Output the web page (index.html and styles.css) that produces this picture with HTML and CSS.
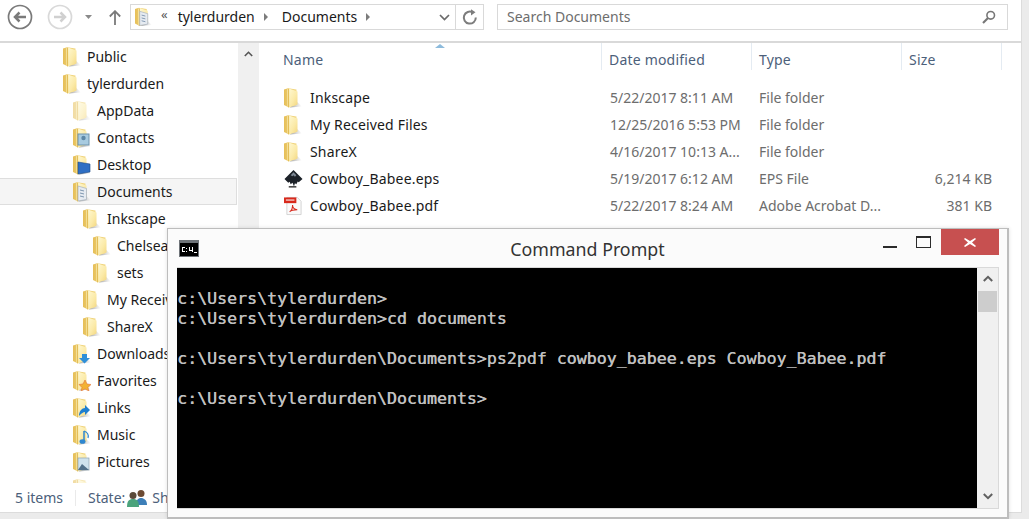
FILE: index.html
```html
<!DOCTYPE html>
<html lang="en">
<head>
<meta charset="utf-8">
<title>Documents</title>
<link rel="stylesheet" href="styles.css">
</head>
<body>
<svg class="defs" width="0" height="0" aria-hidden="true">
  <defs>
    <linearGradient id="fback" x1="0" y1="0" x2="1" y2="0"><stop offset="0" stop-color="#e6bf58"/><stop offset="1" stop-color="#f3da88"/></linearGradient>
    <linearGradient id="ffront" x1="0" y1="0" x2="1" y2="1"><stop offset="0" stop-color="#fffad6"/><stop offset=".6" stop-color="#fbeaa8"/><stop offset="1" stop-color="#f3d67e"/></linearGradient>
    <linearGradient id="fshade" x1="0" y1="0" x2="1" y2="0"><stop offset="0" stop-color="#777" stop-opacity=".7"/><stop offset="1" stop-color="#999" stop-opacity="0"/></linearGradient>
    <symbol id="folder" viewBox="0 0 18 20">
      <path d="M11 12l7 6.500-12 1z" fill="url(#fshade)"/>
      <path d="M0 1.500 4 .2l8.500 1.300V17L4 19 0 17z" fill="url(#fback)"/>
      <path d="M3.500 1.200 5 .6l8.500 2.900V16.500L5 19.500l-1.500-1z" fill="url(#ffront)"/>
      <path d="M4.600 .8v18.600" stroke="#e0b94f" stroke-width="1"/>
    </symbol>
    <symbol id="folder-docs" viewBox="0 0 18 20">
      <use href="#folder" width="18" height="20"/>
      <path d="M5 4l8.500 2.500v11L5 19z" fill="#e6ebf1" stroke="#a4afbd" stroke-width=".7"/>
      <path d="M7 8l4 1M7 11l4 1M7 14l4 1" stroke="#7f97b0"/>
    </symbol>
  </defs>
</svg>

<div class="explorer">
  <header class="toolbar">
    <svg class="nav-back" width="26" height="26" viewBox="0 0 26 26"><circle cx="13" cy="13" r="11.500" fill="#fff" stroke="#7a7a7a" stroke-width="1.700"/><path d="M19 13H8M12.500 8.500 8 13l4.500 4.500" fill="none" stroke="#7a7a7a" stroke-width="2.500"/></svg>
    <svg class="nav-forward" width="26" height="26" viewBox="0 0 26 26"><circle cx="13" cy="13" r="11.500" fill="#fff" stroke="#d9d9d9" stroke-width="1.700"/><path d="M7 13h11M13.500 8.500 18 13l-4.500 4.500" fill="none" stroke="#d0d0d0" stroke-width="2.500"/></svg>
    <svg class="nav-drop" width="8" height="4" viewBox="0 0 8 4"><path d="M0 0h7L3.500 4z" fill="#8a8a8a"/></svg>
    <svg class="nav-up" width="12" height="15" viewBox="0 0 12 15"><path d="M6 15V1.500M.8 6.500 6 1.200l5.200 5.300" fill="none" stroke="#7a7a7a" stroke-width="1.800"/></svg>
    <div class="address">
      <svg class="crumb-icon" width="17" height="20"><use href="#folder-docs" width="17" height="20"/></svg>
      <span class="chev-double">«</span>
      <span class="crumb">tylerdurden</span>
      <span class="crumb-arrow"></span>
      <span class="crumb">Documents</span>
      <span class="crumb-arrow"></span>
      <span class="spacer"></span>
      <svg class="addr-drop" width="11" height="7" viewBox="0 0 11 7"><path d="M1 1l4.500 4.500L10 1" fill="none" stroke="#6a6a6a" stroke-width="1.700"/></svg>
      <span class="refresh">
        <svg width="16" height="17" viewBox="0 0 16 17"><path d="M13.800 8.500a6 6 0 1 1-3-5.100" fill="none" stroke="#7d7d7d" stroke-width="2"/><path d="M9 .3l4.500 2.900L9 6.500z" fill="#7d7d7d"/></svg>
      </span>
    </div>
    <div class="search">
      <span class="search-label">Search Documents</span>
      <svg width="14" height="14" viewBox="0 0 14 14"><circle cx="8.700" cy="5.300" r="3.800" fill="none" stroke="#777" stroke-width="1.600"/><path d="M6 8l-5 5" stroke="#777" stroke-width="2.200"/></svg>
    </div>
  </header>

  <div class="panes">
    <nav class="tree">
      <div class="tree-rows">
        <div class="node l0"><svg class="ico"><use href="#folder" width="18" height="20"/></svg><span>Public</span></div>
        <div class="node l0"><svg class="ico"><use href="#folder" width="18" height="20"/></svg><span>tylerdurden</span></div>
        <div class="node l1 faint"><svg class="ico"><use href="#folder" width="18" height="20"/></svg><span>AppData</span></div>
        <div class="node l1"><svg class="ico" viewBox="0 0 18 20"><use href="#folder" width="18" height="20"/><rect x="5" y="6" width="11" height="11" fill="#a8cbe0" stroke="#6f93ad"/><circle cx="10.500" cy="10" r="2.200" fill="#5d87a6"/></svg><span>Contacts</span></div>
        <div class="node l1"><svg class="ico" viewBox="0 0 18 20"><use href="#folder" width="18" height="20"/><path d="M5 7l12 2v8L5 19z" fill="#2f6fc4" stroke="#1d4a86" stroke-width=".6"/></svg><span>Desktop</span></div>
        <div class="node l1 selected"><svg class="ico"><use href="#folder-docs" width="18" height="20"/></svg><span>Documents</span></div>
        <div class="node l2"><svg class="ico"><use href="#folder" width="18" height="20"/></svg><span>Inkscape</span></div>
        <div class="node l3"><svg class="ico"><use href="#folder" width="18" height="20"/></svg><span>Chelsea</span></div>
        <div class="node l3"><svg class="ico"><use href="#folder" width="18" height="20"/></svg><span>sets</span></div>
        <div class="node l2"><svg class="ico"><use href="#folder" width="18" height="20"/></svg><span>My Received Files</span></div>
        <div class="node l2"><svg class="ico"><use href="#folder" width="18" height="20"/></svg><span>ShareX</span></div>
        <div class="node l1"><svg class="ico" viewBox="0 0 18 20"><use href="#folder" width="18" height="20"/><path d="M9 10h5v4h3l-5.500 5.500L6 14h3z" fill="#2e8fd8"/></svg><span>Downloads</span></div>
        <div class="node l1"><svg class="ico" viewBox="0 0 18 20"><use href="#folder" width="18" height="20"/><path d="M12 9l2 4 4 .5-3 3 1 3.500-4-2-4 2 1-3.500-3-3 4-.5z" fill="#f2b233" stroke="#e0703a" stroke-width=".6"/></svg><span>Favorites</span></div>
        <div class="node l1"><svg class="ico" viewBox="0 0 18 20"><use href="#folder" width="18" height="20"/><path d="M6 18c0-5 3-8 6-8V7l5 5-5 5v-3c-2 0-3 1-6 4z" fill="#1f7fd0"/></svg><span>Links</span></div>
        <div class="node l1"><svg class="ico" viewBox="0 0 18 20"><use href="#folder" width="18" height="20"/><path d="M11 6v10" stroke="#2f87d0" stroke-width="1.500"/><ellipse cx="9.500" cy="16.500" rx="3" ry="2.300" fill="#2f87d0"/><path d="M11 6c3 1 5 3 4 7" fill="none" stroke="#2f87d0" stroke-width="1.200"/></svg><span>Music</span></div>
        <div class="node l1"><svg class="ico" viewBox="0 0 18 20"><use href="#folder" width="18" height="20"/><rect x="5" y="6" width="11" height="12" fill="#cfe3ee" stroke="#8ca3b3" stroke-width=".7"/><path d="M5 18l4-6 7 6z" fill="#52718a"/></svg><span>Pictures</span></div>
        <div class="node l1 faint"><svg class="ico"><use href="#folder" width="18" height="20"/></svg></div>
      </div>
      <div class="tree-scroll">
        <svg width="9" height="6" viewBox="0 0 9 6"><path d="M.8 5 4.500 1.300 8.200 5" fill="none" stroke="#555" stroke-width="1.600"/></svg>
      </div>
    </nav>

    <main class="list">
      <div class="columns">
        <div class="col col-name">Name<span class="sort"></span></div>
        <div class="col col-date">Date modified</div>
        <div class="col col-type">Type</div>
        <div class="col col-size">Size</div>
      </div>
      <div class="rows">
        <div class="row"><div class="c-name"><svg class="ico"><use href="#folder" width="18" height="20"/></svg><span>Inkscape</span></div><div class="c-date">5/22/2017 8:11 AM</div><div class="c-type">File folder</div><div class="c-size"></div></div>
        <div class="row"><div class="c-name"><svg class="ico"><use href="#folder" width="18" height="20"/></svg><span>My Received Files</span></div><div class="c-date">12/25/2016 5:53 PM</div><div class="c-type">File folder</div><div class="c-size"></div></div>
        <div class="row"><div class="c-name"><svg class="ico"><use href="#folder" width="18" height="20"/></svg><span>ShareX</span></div><div class="c-date">4/16/2017 10:13 A...</div><div class="c-type">File folder</div><div class="c-size"></div></div>
        <div class="row"><div class="c-name"><svg class="ico" viewBox="0 0 20 20"><path d="M10 .5 19.500 10l-4 3.500-1-1-1.500 3-1.500-1-1 3.500-1.500-4-2 1.500-1-2.500-1.500 1L.5 10z" fill="#1d2229"/><path d="M10 3 7 6l2 1 1-1 1.500 1.500L13 6z" fill="#7d8894"/><path d="M5 17.500h8V19H5z" fill="#333"/></svg><span>Cowboy_Babee.eps</span></div><div class="c-date">5/19/2017 6:12 AM</div><div class="c-type">EPS File</div><div class="c-size">6,214 KB</div></div>
        <div class="row"><div class="c-name"><svg class="ico" viewBox="0 0 20 20"><path d="M3 1h11l4 4v14H3z" fill="#fafafa" stroke="#c9c9c9" stroke-width=".8"/><rect x="0" y="1" width="13" height="6" fill="#d8291c"/><path d="M2 3h9v1.500H2z" fill="#f4c4c0"/><path d="M6 16c2-1 3-4 3-7 0 3 2 5 5 5-3 0-6 0-8 2z" fill="none" stroke="#d8291c" stroke-width="1.100"/></svg><span>Cowboy_Babee.pdf</span></div><div class="c-date">5/22/2017 8:24 AM</div><div class="c-type">Adobe Acrobat D...</div><div class="c-size">381 KB</div></div>
      </div>
    </main>
  </div>

  <footer class="status">
    <span class="count">5 items</span>
    <span class="state">State:</span>
    <svg class="people" width="20" height="18" viewBox="0 0 20 18"><circle cx="14" cy="4.500" r="3.500" fill="#6c4a32"/><path d="M9 16c0-5 2-7 5-7s6 2 6 7z" fill="#3d7fb8"/><circle cx="6" cy="6.500" r="3.500" fill="#5b4a3a"/><path d="M0 18c0-6 2-8 6-8s6 2 6 8z" fill="#4ba37c"/></svg>
    <span class="state">Shared</span>
  </footer>
</div>

<section class="console">
  <div class="con-title">
    <svg class="con-icon" width="20" height="17" viewBox="0 0 20 17"><rect width="20" height="17" fill="#6f7479"/><rect x="1" y="3" width="18" height="13" fill="#000"/><path d="M3 7h3v1H3zM3 8h1v3H3zM3 11h3v1H3zM7 8h1v1H7zM7 11h1v1H7zM10 7h1v3h2v-3h1v5h-1v-1h-3zM15 12h3v1h-3z" fill="#fff"/></svg>
    <span class="con-name">Command Prompt</span>
    <div class="con-buttons">
      <span class="con-min"></span>
      <span class="con-max"></span>
      <span class="con-close">
        <svg width="12" height="9" viewBox="0 0 12 9"><path d="M1 0l5 3 5-3 1 1-4 3.500L12 8l-1 1-5-3-5 3-1-1 4-3.500L0 1z" fill="#fff"/></svg>
      </span>
    </div>
  </div>
  <div class="con-body">
    <pre class="con-text">
c:\Users\tylerdurden&gt;
c:\Users\tylerdurden&gt;cd documents

c:\Users\tylerdurden\Documents&gt;ps2pdf cowboy_babee.eps Cowboy_Babee.pdf

c:\Users\tylerdurden\Documents&gt;</pre>
    <div class="con-scroll">
      <svg width="10" height="7" viewBox="0 0 10 7"><path d="M.8 6 5 1.800 9.200 6" fill="none" stroke="#606060" stroke-width="2"/></svg>
      <span class="con-thumb"></span>
      <span class="spacer"></span>
      <svg width="10" height="7" viewBox="0 0 10 7"><path d="M.8 1 5 5.200 9.200 1" fill="none" stroke="#606060" stroke-width="2"/></svg>
    </div>
  </div>
</section>
</body>
</html>
```
FILE: styles.css
```css
* { box-sizing: border-box; }
html, body { margin: 0; height: 519px; overflow: hidden; }
body {
  width: 1029px;
  background: #ebebeb;
  position: relative;
  font-family: "Noto Sans", "Open Sans", sans-serif;
  font-size: 14px;
  color: #1a1a1a;
}
.defs { position: absolute; }
.spacer { flex: 1; }

.explorer {
  width: 1022px;
  height: 513px;
  background: #fff;
  border-right: 1px solid #dcdcdc;
  border-bottom: 1px solid #dcdcdc;
  display: flex;
  flex-direction: column;
}

.toolbar {
  height: 43px;
  flex: none;
  display: flex;
  align-items: flex-start;
  padding: 4px 13px 0 7px;
  border-bottom: 2px solid #d9d9d9;
}
.nav-back { margin-right: 14px; flex: none; }
.nav-forward { margin-right: 12px; flex: none; }
.nav-drop { margin: 11px 16px 0 0; flex: none; }
.nav-up { margin: 6px 9px 0 0; flex: none; }

.address, .search {
  height: 26px;
  border: 1px solid #d9d9d9;
  display: flex;
  align-items: center;
  background: #fff;
}
.address { width: 354px; margin-right: 13px; padding-left: 4px; }
.crumb-icon { flex: none; margin-right: 9px; }
.chev-double { color: #555; font-size: 13px; margin: -5px 10px 0 0; line-height: 1; }
.crumb { color: #1a1a1a; margin-bottom: 2px; }
.crumb-arrow {
  width: 0; height: 0;
  margin: 0 14px 0 9px;
  border-left: 4px solid #7c7c7c;
  border-top: 4px solid transparent;
  border-bottom: 4px solid transparent;
}
.addr-drop { flex: none; margin-right: 5px; }
.refresh {
  width: 28px;
  height: 24px;
  border-left: 1px solid #d9d9d9;
  display: flex;
  align-items: center;
  justify-content: center;
}
.search {
  flex: 1;
  justify-content: space-between;
  padding: 0 11px 0 9px;
  color: #6d6d6d;
}
.search-label { margin-bottom: 2px; }

.panes { flex: 1; min-height: 0; display: flex; }

.tree {
  width: 259px;
  flex: none;
  display: flex;
  overflow: hidden;
}
.tree-rows { width: 238px; flex: none; overflow: hidden; }
.tree-scroll {
  width: 21px;
  background: #f0f0f0;
  display: flex;
  justify-content: center;
  padding-top: 8px;
}
.node {
  height: 27px;
  display: flex;
  align-items: center;
  border: 1px solid transparent;
  border-left: 0;
  white-space: nowrap;
}
.node .ico { width: 18px; height: 20px; flex: none; margin-right: 6px; }
.l0 { padding-left: 63px; }
.l1 { padding-left: 73px; }
.l2 { padding-left: 83px; }
.l3 { padding-left: 93px; }
.faint .ico { opacity: .55; }
.selected { background: #f5f5f5; border-color: #dedede; width: 237px; }

.list { flex: 1; min-width: 0; overflow: hidden; }
.columns { display: flex; height: 27px; color: #4c607a; padding-left: 16px; letter-spacing: .2px; }
.col {
  height: 27px;
  padding: 7px 0 0 8px;
  border-right: 1px solid #e4ebf2;
  position: relative;
}
.col-name { width: 327px; }
.col-date { width: 150px; padding-left: 7px; }
.col-type { width: 150px; padding-left: 7px; }
.col-size { width: 100px; padding-left: 7px; }
.sort {
  position: absolute;
  top: 1px;
  left: 160px;
  border-left: 5px solid transparent;
  border-right: 5px solid transparent;
  border-bottom: 4px solid #8dbbdc;
}
.rows { padding: 14px 0 0 25px; color: #6d6d6d; }
.row { display: flex; height: 27px; align-items: center; white-space: nowrap; }
.c-name { width: 326px; display: flex; align-items: center; color: #1a1a1a; letter-spacing: .18px; }
.c-name .ico { width: 19px; height: 20px; flex: none; margin-right: 7px; }
.c-date { width: 149px; }
.c-type { width: 150px; }
.c-size { width: 83px; text-align: right; }

.status {
  height: 29px;
  flex: none;
  display: flex;
  align-items: center;
  padding-left: 15px;
  color: #4c607a;
  white-space: nowrap;
}
.count { padding-right: 12px; margin-right: 12px; border-right: 1px solid #eaeaea; line-height: 16px; }
.people { margin: 0 5px 0 2px; flex: none; }

.console {
  position: absolute;
  left: 167px;
  top: 228px;
  width: 842px;
  height: 291px;
  background: #fbfbfb;
  border: 1px solid #bdbdbd;
  border-width: 1px 2px 2px 1px;
  box-shadow: 0 0 4px rgba(0, 0, 0, .12);
  display: flex;
  flex-direction: column;
}
.con-title {
  height: 38px;
  flex: none;
  position: relative;
  display: flex;
  justify-content: center;
  align-items: flex-start;
}
.con-icon { position: absolute; left: 11px; top: 11px; }
.con-name { font-size: 17.8px; line-height: 20px; margin-top: 10px; color: #333; }
.con-buttons { position: absolute; right: 8px; top: 0; display: flex; align-items: flex-start; }
.con-min { width: 14px; height: 2px; background: #2b2b2b; margin: 17px 19px 0 0; }
.con-max { width: 15px; height: 12px; border: 1px solid #2b2b2b; border-top-width: 2px; margin: 7px 10px 0 0; }
.con-close {
  width: 58px;
  height: 26px;
  background: #c75050;
  display: flex;
  align-items: center;
  justify-content: center;
}
.con-body {
  margin: 0 0 0 9px;
  width: 822px;
  height: 242px;
  display: flex;
  border: 1px solid #d9d9d9;
  border-left: 0;
}
.con-text {
  width: 800px;
  margin: 0;
  background: #000;
  color: #c0c0c0;
  font-family: "DejaVu Sans Mono", "Liberation Mono", monospace;
  font-size: 16.6px;
  line-height: 20px;
  text-shadow: .4px 0 0 #c0c0c0;
  white-space: pre;
  overflow: hidden;
  padding-top: 21px;
}
.con-scroll {
  flex: 1;
  background: #f0f0f0;
  display: flex;
  flex-direction: column;
  align-items: center;
  padding: 7px 1px 8px;
}
.con-thumb { width: 19px; height: 21px; background: #cdcdcd; margin-top: 9px; }
```
